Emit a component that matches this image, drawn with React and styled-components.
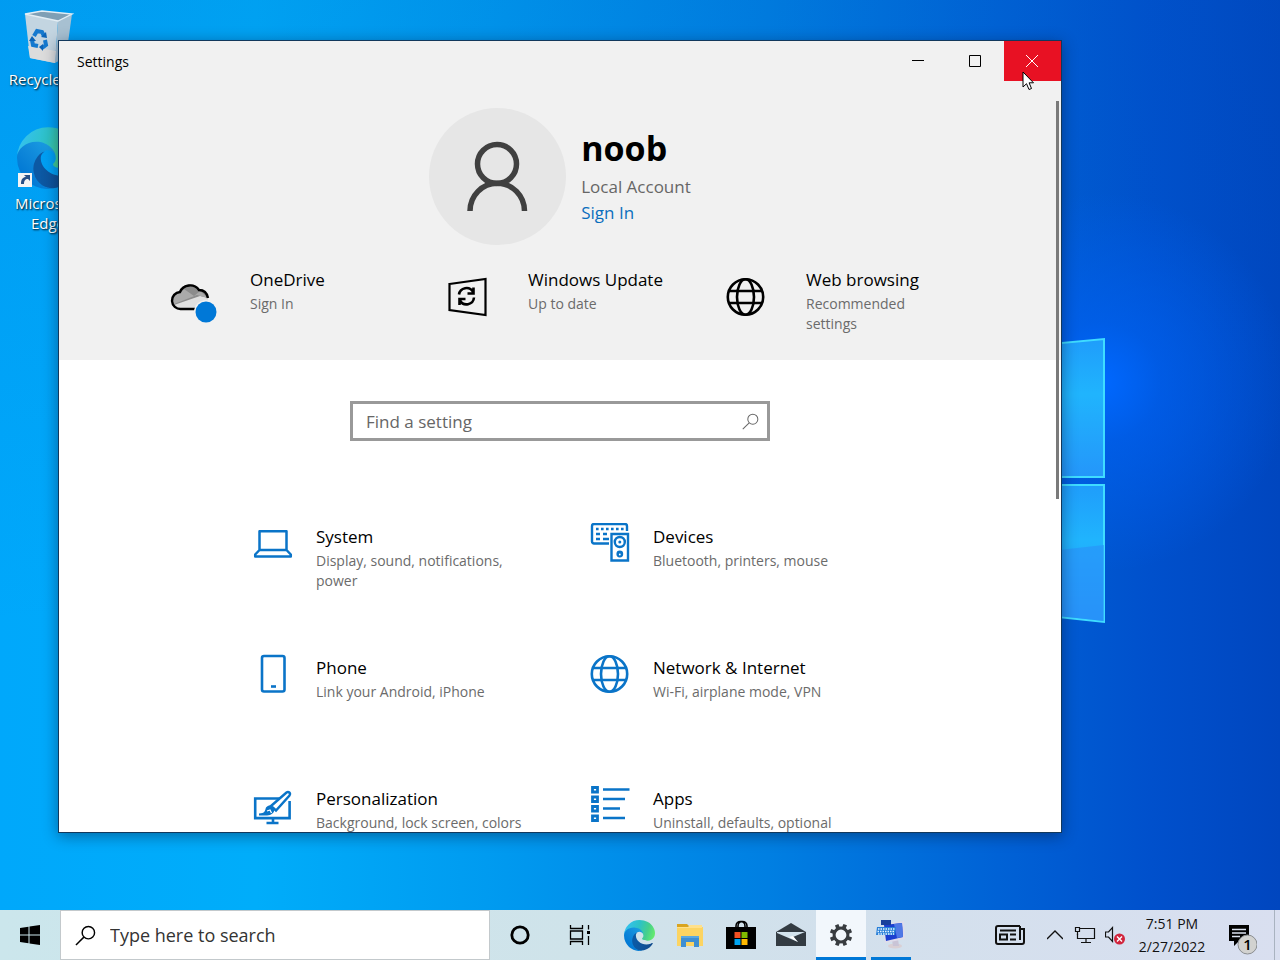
import React, { useId } from "react";
import styled, { createGlobalStyle, css } from "styled-components";

const GlobalStyle = createGlobalStyle`
  * {
    box-sizing: border-box;
  }
  body {
    margin: 0;
    font-family: "Open Sans", "Noto Sans", sans-serif;
    font-size: 15px;
    color: #000;
  }
  button, input {
    font-family: inherit;
  }
`;

const Screen = styled.div`
  display: flex;
  flex-direction: column;
  height: 100vh;
  overflow: hidden;
`;

const Desktop = styled.main`
  position: relative;
  flex: 1;
  min-height: 0;
  overflow: hidden;
  background:
    radial-gradient(circle at 86% 42%, #0068ff 0, rgba(0, 98, 245, 0.6) 60px, rgba(0, 88, 225, 0) 190px),
    linear-gradient(174deg, rgba(0, 90, 190, 0.16) 0, rgba(0, 90, 190, 0) 60%),
    linear-gradient(90deg, #00a8fb 0, #00adfa 20%, #009bf0 38%, #007fe2 60%, #0062d6 78%, #0050cc 90%, #0046bf 100%);
`;

const WallpaperLogo = styled.svg`
  position: absolute;
  top: 334px;
  right: 170px;
`;

const Shortcuts = styled.nav`
  display: flex;
  flex-direction: column;
  gap: 38px;
  width: 96px;
  padding-top: 9px;
`;

const Shortcut = styled.button`
  display: flex;
  flex-direction: column;
  align-items: center;
  gap: 4px;
  padding: 0;
  border: 0;
  background: none;
  color: #fff;
  font-size: 15px;
  line-height: 20px;
  text-shadow: 1px 1px 2px #000;
`;

const Window = styled.section`
  position: absolute;
  top: 40px;
  right: 218px;
  bottom: 77px;
  left: 58px;
  display: flex;
  flex-direction: column;
  border: 1px solid #12385c;
  background: #fff;
  box-shadow: 0 3px 14px rgba(0, 20, 50, 0.45);
`;

const TitleBar = styled.header`
  display: flex;
  flex: none;
  height: 40px;
  padding-left: 18px;
  background: #f1f1f1;
`;

const WindowTitle = styled.h1`
  flex: 1;
  margin: 0;
  font-size: 14px;
  font-weight: 400;
  line-height: 41px;
`;

const WindowButton = styled.button`
  display: flex;
  align-items: center;
  justify-content: center;
  width: 57px;
  padding: 0 1px 0 0;
  border: 0;
  color: ${(props) => (props.$danger ? "#fff" : "#000")};
  background: ${(props) => (props.$danger ? "#e81123" : "transparent")};
`;

const WindowBody = styled.div`
  position: relative;
  flex: 1;
  min-height: 0;
  overflow: hidden;
`;

const ScrollThumb = styled.div`
  position: absolute;
  top: 20px;
  right: 2px;
  width: 3px;
  height: 53%;
  background: #7a7a7a;
`;

const AccountHeader = styled.div`
  padding: 27px 0 26px;
  background: #f1f1f1;
`;

const Profile = styled.div`
  display: flex;
  justify-content: center;
  gap: 15px;
`;

const Avatar = styled.div`
  width: 137px;
  height: 137px;
  border-radius: 50%;
  background: #e6e6e6;
`;

const ProfileText = styled.div`
  display: flex;
  flex-direction: column;
  padding-top: 15px;
  font-size: 17px;
  line-height: 26px;
`;

const UserName = styled.h2`
  margin: 0 0 1px;
  font-size: 34px;
  font-weight: 700;
  line-height: 50px;
`;

const AccountKind = styled.span`
  color: #666;
`;

const SignInLink = styled.a`
  color: #0a6ebd;
  text-decoration: none;
`;

const StatusRow = styled.div`
  display: grid;
  grid-template-columns: repeat(3, 278px);
  justify-content: center;
  margin-top: 23px;
`;

const tileBase = css`
  display: flex;
  align-items: flex-start;
  color: #000;
  text-decoration: none;
`;

const StatusTile = styled.a`
  ${tileBase}
  gap: 33px;
  padding: 0 30px 0 27px;

  svg {
    flex: none;
    margin-top: 9px;
  }
`;

const CategoryTile = styled.a`
  ${tileBase}
  gap: 23px;
  padding: 0 24px 0 30px;
  color: #0a74c8;

  svg {
    flex: none;
  }
`;

const TileText = styled.div`
  padding-top: ${(props) => props.$top || 0}px;
`;

const TileTitle = styled.div`
  margin-bottom: 2px;
  color: #000;
  font-size: 17px;
  line-height: 24px;
`;

const TileNote = styled.div`
  color: #6b6b6b;
  font-size: 14px;
  line-height: 20px;
`;

const SearchBox = styled.label`
  display: flex;
  align-items: center;
  width: 420px;
  height: 40px;
  margin: 41px auto 82px;
  padding: 0 8px 0 13px;
  border: 3px solid #999;
  color: #666;
  background: #fff;
`;

const searchInput = css`
  flex: 1;
  min-width: 0;
  padding: 0;
  border: 0;
  outline: 0;
  background: none;
`;

const SettingInput = styled.input`
  ${searchInput}
  font-size: 17px;

  &::placeholder {
    color: #666;
    opacity: 1;
  }
`;

const Categories = styled.div`
  display: grid;
  grid-template-columns: repeat(2, 337px);
  grid-auto-rows: 131px;
  justify-content: center;
`;

const Pointer = styled.svg`
  position: absolute;
  top: 71px;
  right: 246px;
`;

const Taskbar = styled.footer`
  display: flex;
  flex: none;
  height: 50px;
  background: linear-gradient(90deg, #cbe6ec 0, #cfe3ea 45%, #d2e0ec 65%, #d9dff0 100%);
`;

const TaskButton = styled.button`
  position: relative;
  display: flex;
  flex: none;
  align-items: center;
  justify-content: center;
  width: ${(props) => props.$width || 50}px;
  height: 50px;
  padding: 0;
  border: 0;
  color: #000;
  background: ${(props) => (props.$active ? "#f2f7fc" : "transparent")};

  &::after {
    content: "";
    position: absolute;
    right: ${(props) => (props.$active ? 0 : 5)}px;
    bottom: 0;
    left: ${(props) => (props.$active ? 0 : 5)}px;
    height: ${(props) => (props.$running ? 3 : 0)}px;
    background: #0078d7;
  }
`;

const TaskSearch = styled.label`
  display: flex;
  align-items: center;
  gap: 14px;
  width: 430px;
  padding-left: 14px;
  border: 1px solid #c3c9cc;
  background: #fff;
`;

const TaskInput = styled.input`
  ${searchInput}
  font-size: 18px;

  &::placeholder {
    color: #333;
    opacity: 1;
  }
`;

const Pinned = styled.div`
  display: flex;
  margin-left: 6px;
`;

const Tray = styled.div`
  display: flex;
  margin-left: auto;
`;

const Clock = styled.time`
  width: 84px;
  padding-top: 2px;
  color: #111;
  font-size: 14px;
  line-height: 23px;
  text-align: center;
`;

const ShowDesktop = styled.button`
  width: 6px;
  margin-left: 4px;
  padding: 0;
  border: 0;
  border-left: 1px solid #a9b3c0;
  background: none;
`;

const EdgeLogo = ({ size }) => {
  const id = useId();
  return (
    <svg width={size} height={size} viewBox="0 0 256 256">
      <defs>
        <linearGradient id={id + "a"} x1="0.2" y1="0.5" x2="1" y2="0.5">
          <stop offset="0" stopColor="#0c59a4" />
          <stop offset="1" stopColor="#114a8b" />
        </linearGradient>
        <linearGradient id={id + "b"} x1="0.9" y1="0.2" x2="0.3" y2="0.9">
          <stop offset="0" stopColor="#1b9de2" />
          <stop offset="0.5" stopColor="#0f88da" />
          <stop offset="1" stopColor="#0078d4" />
        </linearGradient>
        <linearGradient id={id + "c"} x1="0" y1="0.4" x2="1" y2="0.6">
          <stop offset="0" stopColor="#35c1f1" />
          <stop offset="0.45" stopColor="#2dc2c6" />
          <stop offset="0.75" stopColor="#45cf8c" />
          <stop offset="1" stopColor="#66eb6e" />
        </linearGradient>
      </defs>
      <path
        fill={`url(#${id}a)`}
        d="M231 190.500c-3.400 1.800-6.900 3.400-10.400 4.700a101 101 0 0 1-35.400 6.400c-46.600 0-87.200-32.100-87.200-73.300.1-11.200 6.300-21.500 16.100-26.900-42.200 1.800-53 45.700-53 71.500 0 72.800 67.100 80.200 81.500 80.200 7.800 0 19.600-2.300 26.600-4.500l1.300-.4a128 128 0 0 0 66.600-52.800 4 4 0 0 0-6.100-4.900z"
      />
      <path
        fill={`url(#${id}b)`}
        d="M105.700 241.400a79 79 0 0 1-22.700-21.300 80.700 80.700 0 0 1 29.500-120c3.100-1.500 8.500-4.100 15.600-4a32.400 32.400 0 0 1 25.700 13 31.900 31.900 0 0 1 6.300 18.700c0-.2 24.500-79.600-80-79.600-43.900 0-80 41.700-80 78.200a130 130 0 0 0 12.100 56 128 128 0 0 0 156.400 67.100 75.500 75.500 0 0 1-62.900-8.100z"
      />
      <path
        fill={`url(#${id}c)`}
        d="M152.300 148.900c-.8 1-3.300 2.500-3.300 5.600 0 2.600 1.700 5.100 4.700 7.200 14.400 10 41.500 8.700 41.600 8.700a59.600 59.600 0 0 0 30.300-8.300 61.400 61.400 0 0 0 30.400-52.900c.3-22.400-8-37.300-11.300-43.900C223.500 23.800 177.700 1 128 1A128 128 0 0 0 0 127.200c.5-36.500 36.800-66 80-66 3.500 0 23.500.3 42 10 16.300 8.600 24.900 19 30.900 29.200 6.200 10.700 7.300 24.200 7.300 29.500s-2.800 13.400-7.900 19z"
      />
    </svg>
  );
};

const RecycleBin = () => (
  <svg width="52" height="56" viewBox="0 0 52 56">
    <path d="M3 5 20 2l30 3-14 8z" fill="#7f9fb5" />
    <path d="M3 5 36 12 33 54 8 49z" fill="#c3d5e1" />
    <path d="M36 12 50 5 44 48 33 54z" fill="#a7c0d1" />
    <path d="m6 37 28 5-1 12-25-5z" fill="#dcdcdc" />
    <path d="M3 5 20 2l30 3-14 7z" fill="none" stroke="#e3eef5" strokeWidth="1.300" />
    <g fill="none" stroke="#1479cf" strokeWidth="4">
      <path d="m12 27 3-5 5 1 2 4" />
      <path d="m23 31 1 5-4 3" />
      <path d="m16 37-5-1-1-5" />
    </g>
    <path d="m19 28 6 1-1-6zM21 35v7l-4-4zM7 32l3-5 4 5z" fill="#0c64b8" />
  </svg>
);

const EdgeShortcut = () => (
  <svg width="62" height="62" viewBox="0 0 62 62">
    <EdgeLogo size={62} />
    <rect x="1" y="46" width="14" height="14" fill="#f4f4f4" />
    <path d="M4 57c0-5 2-7 5-7l-2-2h6v6l-2-2c-3 0-4 2-4 5z" fill="#284f86" />
  </svg>
);

const Globe = () => (
  <svg width="40" height="40" viewBox="0 0 40 40" fill="none" stroke="currentColor" strokeWidth="2.600">
    <circle cx="19.500" cy="20" r="17.700" />
    <ellipse cx="19.500" cy="20" rx="8.500" ry="17.700" />
    <path d="M3 14h33M3 26h33" />
  </svg>
);

const OneDriveIcon = () => (
  <svg width="47" height="48" viewBox="0 0 47 48">
    <path d="M10 32a8.500 8.500 0 0 1-1-17 11 11 0 0 1 20-2 9 9 0 0 1 9 9v10z" fill="#e0e0e0" />
    <path d="M9 15a11 11 0 0 1 20-2 9 9 0 0 1 9 8l-8-2L4 28c-4-5-1-12 5-13z" fill="#8c8c8c" />
    <path d="m9 15 5-3 10 7 6-5 8 7-11-3-23 9c-3-5-1-11 5-12z" fill="#aaa" />
    <path
      d="M25 32H11a8.500 8.500 0 0 1-1-17 11 11 0 0 1 19-2c5 0 8 3 9 8"
      fill="none"
      stroke="#000"
      strokeWidth="2.400"
    />
    <circle cx="36" cy="35" r="12" fill="#f1f1f1" />
    <circle cx="36" cy="35" r="10.500" fill="#0078d7" />
  </svg>
);

const UpdateIcon = () => (
  <svg width="40" height="40" viewBox="0 0 40 40" fill="none" stroke="#000" strokeWidth="2.200">
    <path d="M1.500 7 37.500 2v36L1.500 33z" />
    <path d="M11 17.500A7.500 7.500 0 0 1 25 15M25.500 10.500v6h-6M26 20.500a7.500 7.500 0 0 1-14 3M11.500 28v-6h6" strokeWidth="2.600" />
  </svg>
);

const LaptopIcon = () => (
  <svg width="40" height="40" viewBox="0 0 40 40" fill="none" stroke="currentColor" strokeWidth="2.500">
    <path d="M6.500 27V8.200h27V27M6.500 27 2.200 31.500v2h35.600v-2L33.500 27z" strokeLinejoin="round" />
  </svg>
);

const DevicesIcon = () => (
  <svg width="40" height="40" viewBox="0 0 40 40" fill="none" stroke="currentColor" strokeWidth="2.400">
    <path d="M19 20.500H4a2 2 0 0 1-2-2V3a2 2 0 0 1 2-2h31a2 2 0 0 1 2 2v5" />
    <path d="M6 6h28" strokeWidth="2.600" strokeDasharray="2.600 2.400" />
    <path d="M6 11h4m3 0h4M6 16h4m3 0h6" strokeWidth="2.400" />
    <path d="M21.500 11h16.500v26.500H21.500z" />
    <circle cx="29.800" cy="19" r="5" />
    <circle cx="29.800" cy="19" r="1.500" fill="currentColor" stroke="none" />
    <circle cx="29.800" cy="31" r="3.400" fill="currentColor" stroke="none" />
    <circle cx="29.800" cy="31.500" r="0.900" fill="#fff" stroke="none" />
  </svg>
);

const PhoneIcon = () => (
  <svg width="40" height="40" viewBox="0 0 40 40" fill="none" stroke="currentColor" strokeWidth="2.600">
    <rect x="9" y="2" width="22.500" height="35.500" rx="2" />
    <path d="M18 32.500h5" />
  </svg>
);

const BrushIcon = () => (
  <svg width="40" height="40" viewBox="0 0 40 40" fill="none" stroke="currentColor" strokeWidth="2.600">
    <path d="M27 13.500H2.200v19.600h34.400V16M20 34v4M13.500 38h12" />
    <path d="M6 28.500c6 0 6-3 7-6 2-3 7-2.500 8 0s0 6-4 7.500c-3 .8-8 .5-11 .5z" fill="currentColor" stroke="none" />
    <path d="m18 21 15.500-13.500c2-1.500 4.500.5 3 3L23 25.500z" fill="#fff" strokeWidth="2.400" />
    <path d="m14 26 3-1 1.500 3" stroke="#fff" strokeWidth="1.300" />
  </svg>
);

const AppsIcon = () => (
  <svg width="40" height="40" viewBox="0 0 40 40" fill="none" stroke="currentColor" strokeWidth="2.800">
    <path d="M2.500 2.500h5v4.500h-5zM2.500 12h5v4.500h-5zM2.500 21.500h5V26h-5zM2.500 31h5v4.500h-5z" />
    <path d="M13 4.500h26.500M13 14h22M13 23.500h17M13 33h22" strokeWidth="2.500" />
  </svg>
);

const Magnifier = ({ size, width }) => (
  <svg width={size} height={size} viewBox="0 0 22 22" fill="none" stroke="currentColor" strokeWidth={width}>
    <circle cx="14" cy="8" r="6.500" />
    <path d="M9.300 12.700 1 21" />
  </svg>
);

const GearIcon = () => (
  <svg width="24" height="24" viewBox="0 0 24 24" stroke="#383c40" fill="none">
    <circle cx="12" cy="12" r="6.900" strokeWidth="3" />
    {[0, 45, 90, 135, 180, 225, 270, 315].map((angle) => (
      <path key={angle} d="M12 .800v4" strokeWidth="3.800" transform={`rotate(${angle + 22} 12 12)`} />
    ))}
  </svg>
);

const statuses = [
  { title: "OneDrive", note: "Sign In", icon: <OneDriveIcon /> },
  { title: "Windows Update", note: "Up to date", icon: <UpdateIcon /> },
  { title: "Web browsing", note: "Recommended settings", icon: <Globe /> },
];

const categories = [
  { title: "System", note: "Display, sound, notifications, power", icon: <LaptopIcon /> },
  { title: "Devices", note: "Bluetooth, printers, mouse", icon: <DevicesIcon /> },
  { title: "Phone", note: "Link your Android, iPhone", icon: <PhoneIcon /> },
  { title: "Network & Internet", note: "Wi-Fi, airplane mode, VPN", icon: <Globe /> },
  { title: "Personalization", note: "Background, lock screen, colors", icon: <BrushIcon /> },
  { title: "Apps", note: "Uninstall, defaults, optional", icon: <AppsIcon /> },
];

const IconSlot = styled.span`
  display: flex;
  flex: none;
  width: 47px;
`;

const SettingsWindow = () => (
  <Window>
    <TitleBar>
      <WindowTitle>Settings</WindowTitle>
      <WindowButton aria-label="Minimize">
        <svg width="12" height="12" stroke="currentColor">
          <path d="M0 5.500h12" />
        </svg>
      </WindowButton>
      <WindowButton aria-label="Maximize">
        <svg width="12" height="12" fill="none" stroke="currentColor">
          <path d="M.5.500h11v11H.5z" />
        </svg>
      </WindowButton>
      <WindowButton aria-label="Close" $danger>
        <svg width="12" height="12" stroke="currentColor">
          <path d="m0 0 12 12M12 0 0 12" />
        </svg>
      </WindowButton>
    </TitleBar>
    <WindowBody>
      <AccountHeader>
        <Profile>
          <Avatar>
            <svg width="137" height="137" fill="none" stroke="#404040" strokeWidth="5.500">
              <circle cx="68" cy="56" r="19.500" />
              <path d="M41 103a27 27.500 0 0 1 54.500 0" />
            </svg>
          </Avatar>
          <ProfileText>
            <UserName>noob</UserName>
            <AccountKind>Local Account</AccountKind>
            <SignInLink href="#signin">Sign In</SignInLink>
          </ProfileText>
        </Profile>
        <StatusRow>
          {statuses.map((item) => (
            <StatusTile key={item.title} href="#status">
              <IconSlot>{item.icon}</IconSlot>
              <TileText>
                <TileTitle>{item.title}</TileTitle>
                <TileNote>{item.note}</TileNote>
              </TileText>
            </StatusTile>
          ))}
        </StatusRow>
      </AccountHeader>
      <SearchBox>
        <SettingInput type="text" placeholder="Find a setting" aria-label="Find a setting" />
        <Magnifier size={17} width={1.3} />
      </SearchBox>
      <Categories>
        {categories.map((item) => (
          <CategoryTile key={item.title} href="#category">
            {item.icon}
            <TileText $top={2}>
              <TileTitle>{item.title}</TileTitle>
              <TileNote>{item.note}</TileNote>
            </TileText>
          </CategoryTile>
        ))}
      </Categories>
      <ScrollThumb />
    </WindowBody>
  </Window>
);

const TaskbarRow = () => (
  <Taskbar>
    <TaskButton $width={60} aria-label="Start">
      <svg width="20" height="20" viewBox="0 0 20 20">
        <path d="M0 3 8.500 1.800V9.500H0zM9.500 1.600 20 0v9.500H9.500zM0 10.500h8.500v7.700L0 17zM9.500 10.500H20V20L9.500 18.400z" />
      </svg>
    </TaskButton>
    <TaskSearch>
      <Magnifier size={21} width={1.5} />
      <TaskInput type="text" placeholder="Type here to search" aria-label="Type here to search" />
    </TaskSearch>
    <TaskButton $width={60} aria-label="Cortana">
      <svg width="20" height="20" fill="none" stroke="#000" strokeWidth="2.800">
        <circle cx="10" cy="10" r="8.200" />
      </svg>
    </TaskButton>
    <TaskButton $width={60} aria-label="Task View">
      <svg width="22" height="20" fill="none" stroke="#000" strokeWidth="1.300">
        <path d="M1.500 0v3.500h12V0M1.500 20v-3.500h12V20M1.500 6h12v8h-12zM19.500 0v4.500M19.500 11v9" />
        <path d="M18 6h3v3h-3z" fill="#000" stroke="none" />
      </svg>
    </TaskButton>
    <Pinned>
      <TaskButton aria-label="Microsoft Edge">
        <svg width="34" height="31">
          <EdgeLogo size={31} />
        </svg>
      </TaskButton>
      <TaskButton aria-label="File Explorer">
        <svg width="30" height="24" viewBox="0 0 30 24">
          <path d="M1 1h10l2 2h13v8H1z" fill="#d9a420" />
          <path d="M1 4h26v19H1z" fill="#fcd462" />
          <path d="M1 4h11l2-2h12v3H1z" fill="#ffe08a" />
          <path d="M5 13h18v11h-5v-5h-8v5H5z" fill="#3f8fd2" />
          <path d="M5 13h18v2H5z" fill="#59a8e2" />
        </svg>
      </TaskButton>
      <TaskButton aria-label="Microsoft Store">
        <svg width="30" height="30" viewBox="0 0 30 30">
          <path d="M10 8V6c0-6 9-6 9 0v2M12 8V6c0-6 9-6 9 0v2" fill="none" stroke="#000" strokeWidth="1.600" />
          <path d="M0 7h30v22H0z" />
          <path d="M8.500 12h6v6h-6z" fill="#f25022" />
          <path d="M15.500 12h6v6h-6z" fill="#7fba00" />
          <path d="M8.500 19h6v6h-6z" fill="#00a4ef" />
          <path d="M15.500 19h6v6h-6z" fill="#ffb900" />
        </svg>
      </TaskButton>
      <TaskButton aria-label="Mail">
        <svg width="30" height="26" viewBox="0 0 30 26">
          <path d="M0 10 15 1l15 9v14H0z" fill="#333b42" />
          <path d="M1 10h28L17 15l5 5-21-9z" fill="#d3e3ed" />
          <path d="m13 15 9 5-5-6z" fill="#fff" />
        </svg>
      </TaskButton>
      <TaskButton $active $running aria-label="Settings">
        <GearIcon />
      </TaskButton>
      <TaskButton $running aria-label="Remote Keyboard">
        <svg width="30" height="30" viewBox="0 0 30 30">
          <ellipse cx="19" cy="26" rx="7" ry="2.500" fill="#d9cfd4" />
          <path d="m16 20 6-1 1 7h-6z" fill="#c9c4d6" />
          <path d="m7 4 21-3 1 18-20 4z" fill="#dfdcea" />
          <path d="m8 5 18-2 1 14-17 4z" fill="#1c3fd0" />
          <path d="m18 4 8-1 1 14-6 1z" fill="#4f78e6" />
          <path d="M5 0h10v5H5z" fill="#183f9b" />
          <path d="M1 7h19l-1 8H0z" fill="#2a80d8" />
          <path d="M2 9h17M1.500 11.500h17M2 14h16" stroke="#e5f3ff" strokeWidth="1.300" strokeDasharray="1.500 1" />
        </svg>
      </TaskButton>
    </Pinned>
    <Tray>
      <TaskButton $width={60} aria-label="News">
        <svg width="30" height="20" viewBox="0 0 30 20" fill="none" stroke="#111" strokeWidth="2">
          <path d="M25 1H3a2 2 0 0 0-2 2v14a2 2 0 0 0 2 2h24a2 2 0 0 0 2-2V4h-4M25 1v14" />
          <path d="M5 5.500h16M5 9.500h7v5H5zM15 9.500h6M15 14.500h6" />
        </svg>
      </TaskButton>
      <TaskButton $width={30} aria-label="Show hidden icons">
        <svg width="16" height="10" fill="none" stroke="#111" strokeWidth="1.300">
          <path d="m0 9 8-8 8 8" />
        </svg>
      </TaskButton>
      <TaskButton $width={30} aria-label="Network">
        <svg width="22" height="18" fill="none" stroke="#111" strokeWidth="1.200">
          <path d="M5 2.500h15.500v10H3.500V8M12 13v3.500M7 16.500h10" />
          <path d="M1.500 1.500h4v4h-4zM3.500 5.500V9" />
        </svg>
      </TaskButton>
      <TaskButton $width={30} aria-label="Volume muted">
        <svg width="20" height="20" viewBox="0 0 20 20">
          <path d="M.5 7h3l4-4.500v14L3.500 12h-3z" fill="none" stroke="#111" strokeWidth="1.200" />
          <circle cx="14.500" cy="14" r="5.500" fill="#d1243c" />
          <path d="m12 11.500 5 5M17 11.500l-5 5" stroke="#fff" strokeWidth="1.400" />
        </svg>
      </TaskButton>
      <Clock>
        7:51 PM
        <br />
        2/27/2022
      </Clock>
      <TaskButton $width={56} aria-label="Notifications">
        <svg width="30" height="40" viewBox="0 0 30 40">
          <path d="M2 10h20v16H12l-5 5v-5H2z" />
          <path d="M5 14.500h14M5 18h14M5 21.500h8" stroke="#dbe2ef" strokeWidth="1.400" />
          <circle cx="20.500" cy="29.500" r="9.500" fill="#d2d2d0" stroke="#8a8d90" />
          <text x="20.500" y="35" fontSize="15" fontWeight="600" textAnchor="middle">
            1
          </text>
        </svg>
      </TaskButton>
      <ShowDesktop aria-label="Show desktop" />
    </Tray>
  </Taskbar>
);

const App = () => {
  return (
    <Screen>
      <GlobalStyle />
      <Desktop>
        <WallpaperLogo width="210" height="294" viewBox="0 0 210 294">
          <defs>
            <linearGradient id="pane" x1="0" y1="0" x2="0" y2="1">
              <stop offset="0" stopColor="#1f9dfb" />
              <stop offset="0.400" stopColor="#20b4fd" />
              <stop offset="1" stopColor="#2496fa" />
            </linearGradient>
          </defs>
          <g fill="url(#pane)" stroke="#3fdcff" strokeWidth="2">
            <path d="M2 24 204 5v138H2z" />
            <path d="M2 151h202v137L2 266z" />
          </g>
          <path d="M150 217 204 211v76L150 281z" fill="#2a90f8" opacity="0.600" />
        </WallpaperLogo>
        <Shortcuts>
          <Shortcut>
            <RecycleBin />
            Recycle Bin
          </Shortcut>
          <Shortcut>
            <EdgeShortcut />
            <span>
              Microsoft
              <br />
              Edge
            </span>
          </Shortcut>
        </Shortcuts>
        <SettingsWindow />
        <Pointer width="12" height="20" viewBox="0 0 12 20">
          <path d="M1 1v15l3.500-3.300L7 18.500l2.500-1-2.400-5.700h4.400z" fill="#fff" stroke="#000" />
        </Pointer>
      </Desktop>
      <TaskbarRow />
    </Screen>
  );
};

export default App;
